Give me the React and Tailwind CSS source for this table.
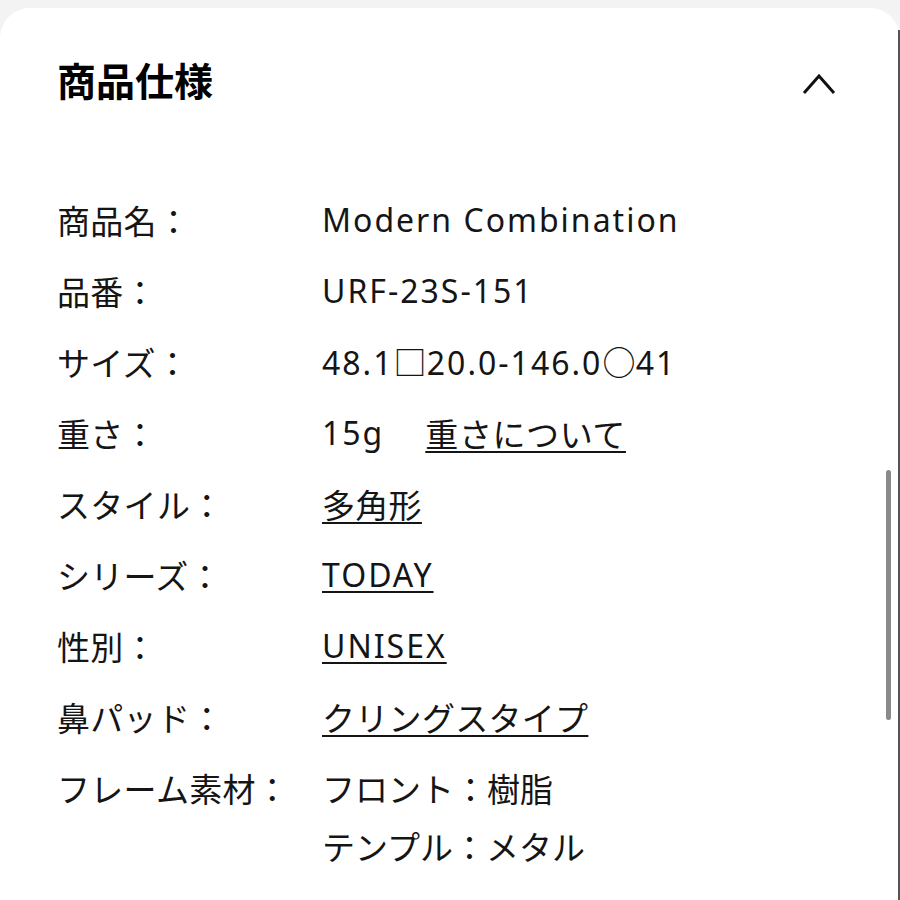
import React from "react";

const LAT = "font-['Noto_Sans','Noto_Sans_CJK_JP',sans-serif] text-[32px] tracking-[2px]";
const JP = "font-['Noto_Sans_CJK_JP',sans-serif] text-[33px] tracking-[0.3px]";

const U = "underline decoration-2 underline-offset-[4px]";

function Row({ label, children }) {
  return (
    <div className="flex h-[58px] mb-[13px] items-center">
      <div className={`w-[265px] shrink-0 h-[58px] ${JP}`}>{label}</div>
      <div className="flex items-center h-[58px]">{children}</div>
    </div>
  );
}

export default function App() {
  return (
    <div
      className="w-[900px] h-[900px] bg-[#f3f3f3] pt-[8px] overflow-hidden relative"
      style={{ fontFamily: '"Noto Sans CJK JP", sans-serif' }}
    >
      <div className="bg-white rounded-t-[30px] h-full pl-[57px] pr-[64px]">
        <div className="flex items-center justify-between pt-[47px] h-[95px]">
          <h2 className="text-[39px] font-bold text-black leading-none">商品仕様</h2>
          <svg width="34" height="22" viewBox="0 0 34 22" className="mt-[10px]">
            <path d="M2 20 L17 3 L32 20" fill="none" stroke="#111" strokeWidth="3" />
          </svg>
        </div>
        <div className="mt-[88px] text-[#151515] leading-[58px]">
          <Row label="商品名：">
            <span className={LAT}>Modern Combination</span>
          </Row>
          <Row label="品番：">
            <span className={LAT}>URF-23S-151</span>
          </Row>
          <Row label="サイズ：">
            <span className={LAT}>
              48.1<span className={JP}>□</span>20.0-146.0<span className={JP}>○</span>41
            </span>
          </Row>
          <Row label="重さ：">
            <span className={LAT}>15g</span>
            <span className={`ml-[41px] ${JP} tracking-[0.6px] ${U}`}>重さについて</span>
          </Row>
          <Row label="スタイル：">
            <span className={`${JP} ${U}`}>多角形</span>
          </Row>
          <Row label="シリーズ：">
            <span className={`${LAT} tracking-[2px] ${U}`}>TODAY</span>
          </Row>
          <Row label="性別：">
            <span className={`${LAT} tracking-[1px] ${U}`}>UNISEX</span>
          </Row>
          <Row label="鼻パッド：">
            <span className={`${JP} ${U}`}>クリングスタイプ</span>
          </Row>
          <div className="flex">
            <div className={`w-[265px] shrink-0 ${JP}`}>フレーム素材：</div>
            <div className={`flex flex-col ${JP} tracking-[0px]`}>
              <span>フロント：樹脂</span>
              <span>テンプル：メタル</span>
            </div>
          </div>
        </div>
      </div>
      <div className="absolute right-[9px] top-[470px] w-[5px] h-[250px] rounded-full bg-[#8a8a8a]" />
      <div className="absolute right-0 top-[30px] w-[2px] h-[870px] bg-[#555]" />
    </div>
  );
}
